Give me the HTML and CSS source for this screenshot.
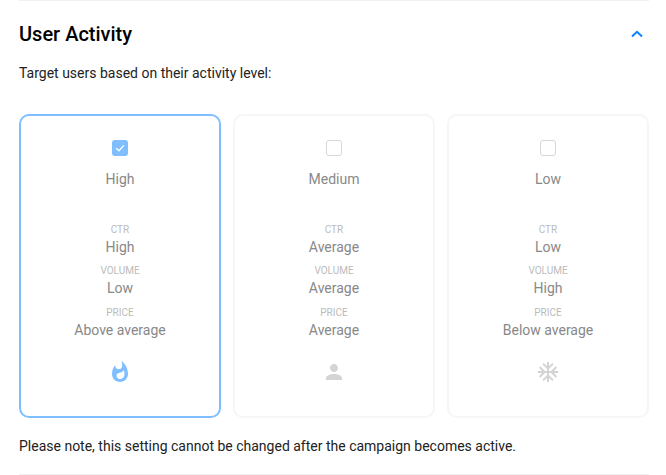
FILE: index.html
```html
<!DOCTYPE html>
<html lang="en">
<head>
  <meta charset="UTF-8">
  <title>User Activity</title>
  <link rel="stylesheet" href="styles.css">
</head>
<body>
  <section class="panel">
    <div class="panel-head">
      <h2>User Activity</h2>
      <svg class="chevron" width="12" height="8" viewBox="0 0 12 8"><path d="M1 6.5 L6 1.8 L11 6.5" fill="none" stroke="#0a84ff" stroke-width="2"/></svg>
    </div>
    <p class="intro">Target users based on their activity level:</p>
    <div class="cards">
      <div class="card card-active">
        <span class="check check-on">
          <svg width="16" height="16" viewBox="0 0 16 16"><path d="M4.2 8.2 L7 10.8 L11.8 5.4" fill="none" stroke="#fff" stroke-width="1.3"/></svg>
        </span>
        <div class="card-name">High</div>
        <div class="stat-label">CTR</div>
        <div class="stat-value">High</div>
        <div class="stat-label">VOLUME</div>
        <div class="stat-value">Low</div>
        <div class="stat-label">PRICE</div>
        <div class="stat-value">Above average</div>
        <svg class="card-icon" width="24" height="24" viewBox="0 0 24 24"><path fill="#7fbfff" d="M13.5.67s.74 2.65.74 4.8c0 2.06-1.35 3.73-3.41 3.73-2.07 0-3.63-1.67-3.63-3.73l.03-.36C5.21 7.51 4 10.62 4 14c0 4.42 3.58 8 8 8s8-3.58 8-8C20 8.61 17.41 3.8 13.5.67zM11.71 19c-1.78 0-3.22-1.4-3.22-3.14 0-1.62 1.05-2.76 2.81-3.12 1.77-.36 3.6-1.21 4.62-2.58.39 1.29.59 2.65.59 4.04 0 2.65-2.15 4.8-4.8 4.8z"/></svg>
      </div>
      <div class="card">
        <span class="check"></span>
        <div class="card-name">Medium</div>
        <div class="stat-label">CTR</div>
        <div class="stat-value">Average</div>
        <div class="stat-label">VOLUME</div>
        <div class="stat-value">Average</div>
        <div class="stat-label">PRICE</div>
        <div class="stat-value">Average</div>
        <svg class="card-icon" width="24" height="24" viewBox="0 0 24 24"><path fill="#d4d4d4" d="M12 12c2.21 0 4-1.79 4-4s-1.79-4-4-4-4 1.79-4 4 1.79 4 4 4zm0 2c-2.67 0-8 1.34-8 4v2h16v-2c0-2.66-5.33-4-8-4z"/></svg>
      </div>
      <div class="card">
        <span class="check"></span>
        <div class="card-name">Low</div>
        <div class="stat-label">CTR</div>
        <div class="stat-value">Low</div>
        <div class="stat-label">VOLUME</div>
        <div class="stat-value">High</div>
        <div class="stat-label">PRICE</div>
        <div class="stat-value">Below average</div>
        <svg class="card-icon" width="24" height="24" viewBox="0 0 24 24"><path fill="#d4d4d4" d="M22 11h-4.170l3.240-3.240-1.410-1.420L15 11h-2V9l4.660-4.660-1.420-1.410L13 6.170V2h-2v4.170L7.760 2.930 6.340 4.340 11 9v2H9L4.340 6.340 2.930 7.760 6.170 11H2v2h4.170l-3.240 3.240 1.410 1.420L9 13h2v2l-4.660 4.660 1.420 1.410L11 17.830V22h2v-4.170l3.240 3.240 1.420-1.410L13 15v-2h2l4.660 4.660 1.410-1.420L17.830 13H22z"/></svg>
      </div>
    </div>
    <p class="note">Please note, this setting cannot be changed after the campaign becomes active.</p>
  </section>
</body>
</html>
```

FILE: styles.css
```css
body {
  margin: 0;
  background: #fff;
  font-family: Roboto, Arial, sans-serif;
}
.panel {
  width: 630px;
  height: 475px;
  box-sizing: border-box;
  margin-left: 19px;
  border-top: 1px solid #f0f0f0;
  border-bottom: 1px solid #f0f0f0;
}
.panel-head {
  display: flex;
  justify-content: space-between;
  align-items: center;
  height: 24px;
  margin-top: 21px;
}
.panel-head h2 {
  margin: 0;
  font-size: 20px;
  font-weight: 500;
  line-height: 24px;
  color: #000;
}
.chevron {
  margin-right: 6px;
}
.intro, .note {
  margin: 0;
  font-size: 14px;
  line-height: 20px;
  color: #222;
}
.intro {
  margin-top: 17px;
}
.cards {
  display: flex;
  gap: 12px;
  margin-top: 31px;
}
.card {
  display: flex;
  flex-direction: column;
  align-items: center;
  box-sizing: border-box;
  width: 202px;
  height: 304px;
  padding-top: 24px;
  border: 2px solid #f6f6f6;
  border-radius: 10px;
}
.card-active {
  border-color: #7fbfff;
}
.check {
  display: block;
  box-sizing: border-box;
  width: 16px;
  height: 16px;
  border: 1px solid #d8d8d8;
  border-radius: 3px;
}
.check-on {
  border: 0;
  background: #7fbfff;
}
.check-on svg {
  display: block;
}
.card-name {
  margin-top: 13px;
  margin-bottom: 34px;
  font-size: 14px;
  line-height: 20px;
  color: #888;
}
.stat-label {
  font-size: 10px;
  line-height: 14px;
  color: #bbb;
}
.stat-value {
  margin-bottom: 7.4px;
  font-size: 14px;
  line-height: 20px;
  color: #888;
}
.card-icon {
  margin-top: 13px;
}
.note {
  margin-top: 18px;
}
```
